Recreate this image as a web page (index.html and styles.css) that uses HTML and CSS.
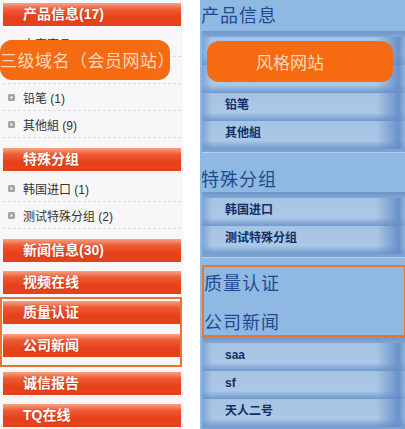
FILE: index.html
```html
<!DOCTYPE html>
<html lang="zh-CN">
<head>
  <meta charset="UTF-8" />
  <title>模板风格</title>
  <link rel="stylesheet" href="styles.css">
</head>
<body>
  <div class="page">
    <!-- red style: member site -->
    <aside class="side side-red">
      <div class="bar">产品信息(17)</div>
      <ul class="items">
        <li><svg class="dot" viewBox="0 0 7 7"><rect width="7" height="7" rx="1.5" fill="#a3a3a3"/><path d="M2.6 1.8 L5 3.5 L2.6 5.2 Z" fill="#fff"/></svg>大家商品 (1)</li>
        <li><svg class="dot" viewBox="0 0 7 7"><rect width="7" height="7" rx="1.5" fill="#a3a3a3"/><path d="M2.6 1.8 L5 3.5 L2.6 5.2 Z" fill="#fff"/></svg>办公用品 (6)</li>
        <li><svg class="dot" viewBox="0 0 7 7"><rect width="7" height="7" rx="1.5" fill="#a3a3a3"/><path d="M2.6 1.8 L5 3.5 L2.6 5.2 Z" fill="#fff"/></svg>铅笔 (1)</li>
        <li><svg class="dot" viewBox="0 0 7 7"><rect width="7" height="7" rx="1.5" fill="#a3a3a3"/><path d="M2.6 1.8 L5 3.5 L2.6 5.2 Z" fill="#fff"/></svg>其他組 (9)</li>
      </ul>
      <div class="bar">特殊分组</div>
      <ul class="items">
        <li><svg class="dot" viewBox="0 0 7 7"><rect width="7" height="7" rx="1.5" fill="#a3a3a3"/><path d="M2.6 1.8 L5 3.5 L2.6 5.2 Z" fill="#fff"/></svg>韩国进口 (1)</li>
        <li><svg class="dot" viewBox="0 0 7 7"><rect width="7" height="7" rx="1.5" fill="#a3a3a3"/><path d="M2.6 1.8 L5 3.5 L2.6 5.2 Z" fill="#fff"/></svg>测试特殊分组 (2)</li>
      </ul>
      <div class="bar">新闻信息(30)</div>
      <div class="bar">视频在线</div>
      <div class="box">
        <div class="bar">质量认证</div>
        <div class="bar">公司新闻</div>
      </div>
      <div class="bar">诚信报告</div>
      <div class="bar">TQ在线</div>

      <div class="tag tag-left">三级域名（会员网站）</div>
    </aside>

    <!-- blue style -->
    <section class="side side-blue">
      <div class="cat cat-first">产品信息</div>
      <ul class="list">
        <li>大家商品</li>
        <li>办公用品</li>
        <li>铅笔</li>
        <li>其他組</li>
      </ul>
      <div class="cat cat-spaced">特殊分组</div>
      <ul class="list">
        <li>韩国进口</li>
        <li>测试特殊分组</li>
      </ul>
      <div class="cat-box">
        <div class="cat">质量认证</div>
        <div class="cat">公司新闻</div>
      </div>
      <ul class="list">
        <li>saa</li>
        <li>sf</li>
        <li>天人二号</li>
      </ul>

      <div class="tag tag-right">风格网站</div>
    </section>
  </div>
</body>
</html>
```

FILE: styles.css
```css
body {
  margin: 0;
  background: #fff;
  font-family: "Liberation Sans", "Noto Sans CJK SC", sans-serif;
}
ul {
  list-style: none;
  margin: 0;
  padding: 0;
}
.page {
  display: flex;
  gap: 17px;
  height: 429px;
  overflow: hidden;
}
.side {
  position: relative;
}

/* left: red bars */
.side-red {
  width: 178px;
  padding: 3px 2px 0 3px;
  background: #f7f6f8;
}
.bar {
  height: 23px;
  line-height: 23px;
  padding-left: 20px;
  margin-top: 9px;
  color: #fff;
  font-size: 14px;
  font-weight: bold;
  text-shadow: 0 0 1px rgba(120, 20, 0, 0.6);
  background: linear-gradient(#f8a286 0, #ef5b34 28%, #e6411a 62%, #e2431d 100%);
}
.bar:first-child {
  margin-top: 0;
}
.items + .bar {
  margin-top: 10px;
}
.items {
  padding-top: 4px;
}
.items li {
  display: flex;
  align-items: center;
  height: 26px;
  padding-left: 5px;
  border-bottom: 1px dashed #dedede;
  font-size: 12px;
  color: #333;
}
.dot {
  width: 7px;
  height: 7px;
  margin-right: 8px;
  flex: none;
}
.box {
  margin: 3px -1px 0 -3px;
  padding: 2px 0 8px 1px;
  border: 2px solid #e8762c;
}
.box .bar + .bar {
  margin-top: 10px;
}
.box + .bar {
  margin-top: 5px;
}

/* right: blue */
.side-blue {
  flex: 1;
  background: #8fb9e3;
}
.cat {
  height: 28px;
  line-height: 28px;
  padding-left: 1px;
  font-size: 18px;
  letter-spacing: 1px;
  color: #1d4c8e;
  font-family: "Noto Sans CJK SC", sans-serif;
}
.cat-first {
  padding-bottom: 3px;
}
.cat-spaced {
  padding-top: 11px;
}
.list {
  margin-left: 2px;
  padding: 6px 0 3px;
  background: linear-gradient(#6e97c9 0, #7ea6d5 6px, #7aa3d3 100%);
  border-bottom: 1px solid #b4cdea;
}
.list li {
  height: 28px;
  line-height: 25px;
  padding-left: 23px;
  font-size: 12px;
  font-weight: bold;
  color: #102f66;
  background:
    linear-gradient(to right, rgba(110, 150, 205, 0.7) 0, rgba(110, 150, 205, 0) 5%, rgba(110, 150, 205, 0) 86%, rgba(100, 140, 200, 0.9) 97%, rgba(130, 170, 220, 0.6) 100%),
    linear-gradient(#a6c3e3 0, #abc8e6 70%, #93b5dd 82%, #7199cb 100%);
}
.cat-box {
  margin: 7px 0 0 2px;
  padding-top: 1px;
  border: 2px solid #e8762c;
  border-right-width: 1px;
}
.cat-box .cat {
  padding-left: 0;
}
.cat-box .cat + .cat {
  margin-top: 11px;
}

/* orange labels on top */
.tag {
  position: absolute;
  border-radius: 12px;
  background: #f66b12;
  color: #fcd6b8;
  font-family: "Noto Sans CJK SC", sans-serif;
  white-space: nowrap;
}
.tag-left {
  top: 40px;
  left: 0;
  width: 170px;
  height: 40px;
  line-height: 40px;
  font-size: 17px;
  letter-spacing: 0.5px;
}
.tag-right {
  top: 41px;
  left: 7px;
  width: 186px;
  height: 41px;
  line-height: 41px;
  padding-right: 20px;
  box-sizing: border-box;
  text-align: center;
  font-size: 17px;
}
```
